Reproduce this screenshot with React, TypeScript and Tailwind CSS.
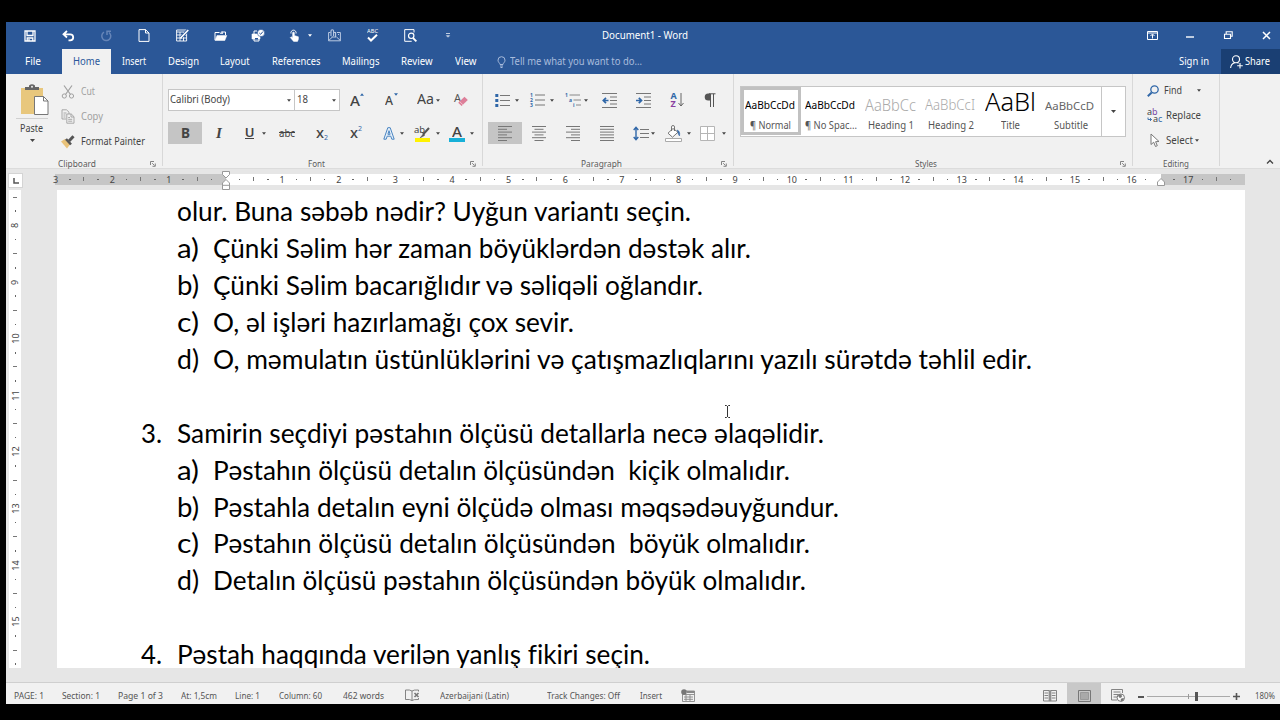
import React, { useLayoutEffect, useRef, useState } from 'react';
import clsx from 'clsx';

// Text squeezed or stretched to an exact width
function Fit({ w, className, children }: { w: number; className?: string; children: React.ReactNode }) {
  const ref = useRef<HTMLSpanElement>(null);
  const [scale, setScale] = useState(1);

  useLayoutEffect(() => {
    if (ref.current) {
      const natural = ref.current.getBoundingClientRect().width / scale;
      if (natural > 0) setScale(w / natural);
    }
  }, [w, children]);

  return (
    <span className={clsx('flex shrink-0 whitespace-pre', className)} style={{ width: w }}>
      <span ref={ref} className="inline-block origin-left" style={{ transform: `scaleX(${scale})` }}>
        {children}
      </span>
    </span>
  );
}

function Caret({ className }: { className?: string }) {
  return (
    <svg className={clsx('shrink-0', className)} width="5" height="3" viewBox="0 0 5 3">
      <path d="M0 0h5L2.5 3z" fill="currentColor" />
    </svg>
  );
}

function Cell({ className, children }: { className?: string; children?: React.ReactNode }) {
  return <div className={clsx('flex shrink-0 items-center justify-center', className)}>{children}</div>;
}

function Svg({ w = 14, h = 14, className, children }: { w?: number; h?: number; className?: string; children: React.ReactNode }) {
  return (
    <svg className={clsx('shrink-0 overflow-visible', className)} width={w} height={h} viewBox={`0 0 ${w} ${h}`} fill="none" stroke="currentColor">
      {children}
    </svg>
  );
}

function Launcher() {
  return (
    <Svg w={6} h={6} className="text-[#777]">
      <path d="M.5 4V.5H4M2.2 2.2l2.3 2.3M5.3 2.5v2.8H2.5" strokeWidth=".9" />
    </Svg>
  );
}

function Group({ className, label, w, launcherPad, children }: { className: string; label: string; w: number; launcherPad?: string; children: React.ReactNode }) {
  return (
    <div className={clsx('flex h-[92px] shrink-0 flex-col border-r border-[#d8d8d8]', className)}>
      <div className="h-[84px] shrink-0">{children}</div>
      <div className="relative flex h-3 shrink-0 items-center justify-center text-[9.5px] text-[#5c5c5c]">
        <Fit w={w}>{label}</Fit>
        {launcherPad && (
          <div className={clsx('absolute top-[3px]', launcherPad)}>
            <Launcher />
          </div>
        )}
      </div>
    </div>
  );
}

function TitleBar() {
  return (
    <div className="relative flex h-[27px] pl-[5px] text-white">
      <Cell className="w-[38px]">
        <Svg w={12} h={12}>
          <path d="M1 1h10v10H1zM3 1v4.5h6V1M3.2 11V8h5.6v3M5 9v2" strokeWidth="1.3" />
        </Svg>
      </Cell>
      <Cell className="w-[38px]">
        <Svg w={13} h={12}>
          <path d="M5 1L1.5 4.3 5 7.5M2 4.3h6.2a3 3 0 0 1 0 6H6.5" strokeWidth="1.8" />
        </Svg>
      </Cell>
      <Cell className="w-[38px] text-[#6685b8]">
        <Svg w={12} h={12}>
          <path d="M4 2.2A4.5 4.5 0 1 0 9 2.5M7 5V1.2h4" strokeWidth="1.5" />
        </Svg>
      </Cell>
      <Cell className="w-[38px]">
        <Svg w={12} h={13}>
          <path d="M1 .6h6.5L11 4v8.4H1zM7.5.6V4H11" strokeWidth="1" />
        </Svg>
      </Cell>
      <Cell className="w-[38px]">
        <Svg w={13} h={13}>
          <path d="M.6 1h10v11H.6zM.6 3h10M.6 6h10M.6 9h10M4 3v9M7.5 3v9" strokeWidth=".9" />
          <path d="M12.5.5L5 8.5" stroke="#2b579a" strokeWidth="3" />
          <path d="M12.3 1L5.5 8 4.5 9.5" strokeWidth="1.6" />
        </Svg>
      </Cell>
      <Cell className="w-[38px]">
        <Svg w={13} h={12}>
          <path d="M1 10V2.5h4.5M7.5 2h4v3" strokeWidth="1" />
          <path d="M1 10.5L3 5.5h9.8l-2 5z" fill="currentColor" strokeWidth=".5" />
          <path d="M6 3.2h3M8 1.5v2" strokeWidth="1" />
        </Svg>
      </Cell>
      <Cell className="w-[38px]">
        <Svg w={14} h={13}>
          <path d="M1 5h8v5H1z" fill="currentColor" strokeWidth=".6" />
          <path d="M3 5V2h3M3 8.5h5v3.5H3z" strokeWidth="1" />
          <path d="M4 9.5h3" stroke="#2b579a" />
          <circle cx="10" cy="4" r="3.6" fill="currentColor" stroke="#2b579a" strokeWidth=".6" />
          <path d="M8.3 4l1.4 1.3 2.2-2.7" stroke="#2b579a" strokeWidth="1" />
        </Svg>
      </Cell>
      <Cell className="w-[38px] gap-[8px] pl-[9px]">
        <Svg w={11} h={13}>
          <path d="M2 4.5a2.6 2.6 0 1 1 5 0" strokeWidth="1" />
          <path d="M3.6 3.6q.9-1 1.8 0v3l4 1.2v2.4L8.5 12.4H4.6L1.3 8.6l.8-.8 1.5 1z" fill="currentColor" strokeWidth=".5" />
        </Svg>
        <Caret className="w-1" />
      </Cell>
      <Cell className="w-[38px] text-[#b9c9e2]">
        <Svg w={13} h={13}>
          <path d="M2.5 3.5H.6v8.3h11.8V3.5H9M.6 11.5L4.5 8M12.4 11.5L8.5 8M10 5.5h1" strokeWidth="1" />
          <path d="M3 7V2a1.3 1.3 0 0 1 2.6 0v5M5.6 3.5h2V8H3.5" strokeWidth="1.1" />
        </Svg>
      </Cell>
      <Cell className="w-[38px] flex-col">
        <Fit w={11} className="text-[5px] leading-[5px]">ABC</Fit>
        <Svg w={11} h={8}>
          <path d="M1 3.5l3 3L10 .8" strokeWidth="2" />
        </Svg>
      </Cell>
      <Cell className="w-[38px]">
        <Svg w={13} h={13}>
          <path d="M10 3.5V.6H.7v11.7h7" strokeWidth="1" />
          <circle cx="7.2" cy="6.8" r="2.7" strokeWidth="1.2" />
          <path d="M9 9l3.4 3.3" strokeWidth="1.8" />
        </Svg>
      </Cell>
      <Cell className="w-[38px]">
        <Svg w={4} h={5}>
          <path d="M0 .5h4M.5 2.7h3L2 4.2z" strokeWidth=".7" />
        </Svg>
      </Cell>
      <Cell className="w-[360px] text-[11px]">
        <Fit w={86} className="-ml-1">Document1 - Word</Fit>
      </Cell>
      <div className="ml-auto mr-[-5px] flex">
        <Cell className="w-[38px]">
          <Svg w={11} h={9}>
            <path d="M.5.5h10v8H.5zM.5 2h10M5.5 7.5v-4M3.5 5l2-2 2 2" strokeWidth="1" />
          </Svg>
        </Cell>
        <Cell className="w-[38px] pt-[3px]">
          <Svg w={8} h={2}>
            <path d="M0 1h8" strokeWidth="1.4" />
          </Svg>
        </Cell>
        <Cell className="w-[38px]">
          <Svg w={9} h={9}>
            <path d="M.5 3.2h6v4.3h-6zM2.2 3V.8h6v4.5H6.7" strokeWidth="1.1" />
          </Svg>
        </Cell>
        <Cell className="w-[38px]">
          <Svg w={9} h={9}>
            <path d="M1 1l7 7M8 1L1 8" strokeWidth="1.5" />
          </Svg>
        </Cell>
      </div>
    </div>
  );
}

const tabs = [
  { name: 'Insert', w: 24 },
  { name: 'Design', w: 31 },
  { name: 'Layout', w: 29.5 },
  { name: 'References', w: 48.5 },
  { name: 'Mailings', w: 37.5 },
  { name: 'Review', w: 31.5 },
  { name: 'View', w: 21.5 },
];

function TabBar() {
  return (
    <div className="flex h-[25px] items-center text-[11px] text-white">
      <Fit w={16} className="ml-[19px] mr-[21px]">File</Fit>
      <div className="flex h-full w-[49px] items-center justify-center bg-[#f1f1f1] text-[#2b579a]">
        <Fit w={27}>Home</Fit>
      </div>
      {tabs.map((t) => (
        <div key={t.name} className="px-[10.9px]">
          <Fit w={t.w}>{t.name}</Fit>
        </div>
      ))}
      <div className="flex items-center gap-1 pl-[10px] text-[#a9bcdc]">
        <Svg w={9} h={12}>
          <path d="M3 8.5C3 7 1 6.5 1 4.2a3.5 3.5 0 0 1 7 0C8 6.5 6 7 6 8.5zM3 10h3M3.5 11.5h2" strokeWidth="1" />
        </Svg>
        <Fit w={132}>Tell me what you want to do...</Fit>
      </div>
      <Fit w={30} className="ml-auto mr-[12.5px]">Sign in</Fit>
      <div className="flex h-full w-[59px] items-center gap-[2px] bg-[#1a3f73] pl-[9px]">
        <Svg w={13} h={14}>
          <circle cx="6" cy="4.3" r="3.5" strokeWidth="1.1" />
          <path d="M.6 13c.3-3 1.8-4.6 4-5.3M7.5 7.7l1 .5M10 8v5.5M7.2 10.7h5.6" strokeWidth="1.1" />
        </Svg>
        <Fit w={25}>Share</Fit>
      </div>
    </div>
  );
}

function Clipboard() {
  return (
    <Group className="w-[157px] pr-[14px]" label="Clipboard" w={38} launcherPad="-right-[8px]">
      <div className="flex h-full">
        <div className="flex w-[42px] flex-col items-center pl-[10px] pt-[10px]">
          <Svg w={29} h={32} className="ml-[4px]">
            <path d="M1 4h22v26H1z" fill="#e8c77d" stroke="none" />
            <path d="M5 6V3h4V1.5q3-2.5 6 0V3h4v3z" fill="#666" stroke="none" />
            <circle cx="12" cy="2.8" r="1" fill="#eee" stroke="none" />
            <path d="M14.5 12.5h9l4.5 4.5v13.5H14.5z" fill="#fff" stroke="#777" />
            <path d="M23.5 12.5V17H28" stroke="#777" />
          </Svg>
          <div className="mt-[2px] h-px w-8 bg-[#d0d0d0]" />
          <Fit w={23} className="-ml-[2px] mt-px text-[10.5px] leading-[16px]">Paste</Fit>
          <Caret className="mt-[3px]" />
        </div>
        <div className="flex flex-col pl-[13px] pt-[5px] text-[10.5px]">
          <div className="flex h-[25px] items-center gap-[6px] text-[#a0a0a0]">
            <Svg w={14} h={14}>
              <path d="M3 .5l6.5 9M11 .5l-6.5 9" strokeWidth="1.2" />
              <circle cx="3.3" cy="11" r="2.1" />
              <circle cx="10.5" cy="11" r="2.1" />
            </Svg>
            <Fit w={14}>Cut</Fit>
          </div>
          <div className="flex h-[25px] items-center gap-[6px] text-[#a0a0a0]">
            <Svg w={14} h={15}>
              <path d="M5 10H1V.8h4.5L8 3.2V5M2.5 4h3M2.5 6h2M2.5 8h2" strokeWidth=".9" />
              <path d="M5.8 5h4.5L13 7.7v6.5H5.8zM10 5v3h3M7.2 8.5H9M7.2 10.3h4M7.2 12.2h4" strokeWidth=".9" />
            </Svg>
            <Fit w={22}>Copy</Fit>
          </div>
          <div className="flex h-[26px] items-center gap-[6px]">
            <Svg w={14} h={14}>
              <path d="M0 6.5l4-2.5 5 5.5-3 4z" fill="#e8c27a" stroke="none" />
              <path d="M5 4l5 5.5" stroke="#555" strokeWidth="2.6" />
              <path d="M8 6l4.5-4.7" stroke="#555" strokeWidth="3" />
            </Svg>
            <Fit w={64}>Format Painter</Fit>
          </div>
        </div>
      </div>
    </Group>
  );
}

function FontGroup() {
  return (
    <Group className="w-[320px] pl-[5px] pr-[18px]" label="Font" w={17} launcherPad="-right-[12px]">
      <div className="flex h-[48px] items-end pb-[11px]">
        <div className="flex h-[22px] w-[127px] shrink-0 items-center justify-between border border-[#c6c6c6] bg-white pl-[1px] pr-[3px] text-[10.5px]">
          <Fit w={60}>Calibri (Body)</Fit>
          <Caret className="w-1" />
        </div>
        <div className="flex h-[22px] w-[45px] shrink-0 items-center justify-between border border-l-0 border-[#c6c6c6] bg-white pl-[2px] pr-[3px] text-[10.5px]">
          <Fit w={11}>18</Fit>
          <Caret className="w-1" />
        </div>
        <Cell className="h-[22px] w-[34px]">
          <Fit w={10} className="text-[15px] font-medium leading-none">A</Fit>
          <Caret className="mb-[11px] w-1 rotate-180 text-[#3067a8]" />
        </Cell>
        <Cell className="h-[22px] w-[34px]">
          <Fit w={8} className="pt-[2px] text-[12.5px] font-medium leading-none">A</Fit>
          <Caret className="mb-[12px] ml-[1px] w-1 text-[#3067a8]" />
        </Cell>
        <Cell className="h-[22px] w-[40px] gap-[2px]">
          <Fit w={17} className="text-[13.5px] leading-none">Aa</Fit>
          <Caret className="w-1" />
        </Cell>
        <Cell className="h-[22px] w-[26px]">
          <Svg w={14} h={14}>
            <text x="0" y="9" fontSize="11" fill="#555" stroke="none">A</text>
            <path d="M10.5 3.8l3.3 3.3-6.2 6L4.2 9.8z" fill="#dd7f99" stroke="none" />
            <path d="M5.6 8.5L9 11.9" stroke="#f5cbd6" strokeWidth=".8" />
          </Svg>
        </Cell>
      </div>
      <div className="flex h-[22px]">
        <Cell className="w-[34px] bg-[#c5c5c5]">
          <Fit w={9} className="text-[14px] font-bold leading-none">B</Fit>
        </Cell>
        <Cell className="w-[34px] font-['Liberation_Serif'] text-[15px] font-bold italic leading-none">I</Cell>
        <Cell className="w-[34px] gap-[8px] pl-[5px]">
          <span className="border-b-[1.5px] border-[#444] text-[13px] font-semibold leading-[11px]">U</span>
          <Caret className="w-1" />
        </Cell>
        <Cell className="w-[34px]">
          <Fit w={16} className="text-[11px] line-through">abc</Fit>
        </Cell>
        <Cell className="w-[34px] pl-[2px]">
          <Fit w={8} className="text-[14px] font-medium leading-none">x</Fit>
          <span className="mt-[9px] text-[7px] leading-none text-[#3067a8]">2</span>
        </Cell>
        <Cell className="w-[34px] pl-[2px]">
          <Fit w={8} className="text-[14px] font-medium leading-none">x</Fit>
          <span className="mb-[9px] text-[7px] leading-none text-[#3067a8]">2</span>
        </Cell>
        <Cell className="w-[34px] gap-[5px] pl-[8px]">
          <Svg w={12} h={13}>
            <path d="M4.8.7h2.4l4 11.5H8.8l-1-3H4.2l-1 3H.8zM6 3.7L4.9 7.3h2.2z" fill="#e6f0fa" stroke="#4b86c2" strokeWidth="1" />
          </Svg>
          <Caret className="w-1" />
        </Cell>
        <Cell className="w-[34px] gap-[5px] pl-[7px]">
          <Svg w={17} h={17}>
            <text x="0" y="8" fontSize="9.5" fill="#444" stroke="none">ab</text>
            <path d="M15 3l-6 6.5" strokeWidth="2" stroke="#555" />
            <path d="M10 8l-4 5 4.5-2.5z" fill="#555" stroke="#555" strokeWidth=".5" />
            <path d="M1 13h15v4H1z" fill="#fff200" stroke="none" />
          </Svg>
          <Caret className="w-1" />
        </Cell>
        <Cell className="w-[36px] gap-[5px] pl-[7px]">
          <div className="flex w-4 flex-col items-center">
            <Fit w={10} className="text-[14px] font-medium leading-[13px]">A</Fit>
            <div className="h-1 w-4 bg-[#17b0d8]" />
          </div>
          <Caret className="w-1" />
        </Cell>
      </div>
    </Group>
  );
}

function AlignLines({ d }: { d: string }) {
  return (
    <Svg w={14} h={15} className="text-[#777]">
      <path d={d} strokeWidth="1" />
    </Svg>
  );
}

function ParagraphGroup() {
  return (
    <Group className="w-[251px] pl-[5px] pr-[18px]" label="Paragraph" w={41} launcherPad="-right-[12px]">
      <div className="flex h-[48px] items-end pb-[11px]">
        <Cell className="h-[22px] w-[35px] gap-[5px] pl-[3px]">
          <Svg w={15} h={15} className="text-[#777]">
            <path d="M5 2.5h10M5 7.5h10M5 12.5h10" />
            <path d="M.3 2.5h3M.3 7.5h3M.3 12.5h3" stroke="#3067a8" strokeWidth="3" />
          </Svg>
          <Caret className="w-1" />
        </Cell>
        <Cell className="h-[22px] w-[35px] gap-[5px] pl-[2px]">
          <Svg w={15} h={16} className="text-[#777]">
            <path d="M5 3h10M5 8h10M5 13h10" />
            <g fill="#3067a8" stroke="none" fontSize="5" fontWeight="bold">
              <text x="0" y="4.8">1</text>
              <text x="0" y="10">2</text>
              <text x="0" y="15.2">3</text>
            </g>
          </Svg>
          <Caret className="w-1" />
        </Cell>
        <Cell className="h-[22px] w-[34px] gap-[3px] pl-[2px]">
          <Svg w={16} h={16} className="text-[#888]">
            <path d="M4.5 3H15M8.5 8H16M11 13h5" />
            <g fill="#3067a8" stroke="none" fontSize="5" fontWeight="bold">
              <text x="0" y="4.8">1</text>
              <text x="4" y="10">a</text>
              <text x="8" y="15.2">i</text>
            </g>
          </Svg>
          <Caret className="w-1" />
        </Cell>
        <Cell className="h-[22px] w-[34px]">
          <Svg w={15} h={15} className="text-[#777]">
            <path d="M0 .5h15M8 4h7M8 7.5h7M8 11h7M0 14.5h15" />
            <path d="M6.5 7.5H1.5M4 4.8L1.3 7.5 4 10.2" stroke="#3067a8" strokeWidth="1.7" />
          </Svg>
        </Cell>
        <Cell className="h-[22px] w-[34px]">
          <Svg w={15} h={15} className="text-[#777]">
            <path d="M0 .5h15M8 4h7M8 7.5h7M8 11h7M0 14.5h15" />
            <path d="M0 7.5h5.3M2.8 4.8l2.7 2.7-2.7 2.7" stroke="#3067a8" strokeWidth="1.7" />
          </Svg>
        </Cell>
        <Cell className="h-[22px] w-[34px]">
          <div className="flex flex-col text-[9px] font-bold leading-[8px]">
            <span className="text-[#3067a8]">A</span>
            <span className="text-[#8a3fa0]">Z</span>
          </div>
          <Svg w={6} h={14} className="ml-px text-[#666]">
            <path d="M3 0v13M.5 10L3 13l2.5-3" />
          </Svg>
        </Cell>
        <Cell className="h-[22px] w-[32px]">
          <Svg w={12} h={14} className="text-[#555]">
            <path d="M5 .8h6.5M6.5.8V14M9.5.8V14" strokeWidth="1" />
            <path d="M6 .5H4.2a3.5 3.5 0 0 0 0 7H6z" fill="currentColor" stroke="none" />
          </Svg>
        </Cell>
      </div>
      <div className="flex h-[22px]">
        <Cell className="w-[34px] bg-[#c5c5c5]">
          <AlignLines d="M0 .5h14M0 3.3h9M0 6.1h14M0 8.9h9M0 11.7h14M0 14.5h9" />
        </Cell>
        <Cell className="w-[34px]">
          <AlignLines d="M0 .5h14M2.5 3.3h9M0 6.1h14M2.5 8.9h9M0 11.7h14M2.5 14.5h9" />
        </Cell>
        <Cell className="w-[34px]">
          <AlignLines d="M0 .5h14M5 3.3h9M0 6.1h14M5 8.9h9M0 11.7h14M5 14.5h9" />
        </Cell>
        <Cell className="w-[34px]">
          <AlignLines d="M0 .5h14M0 3.3h14M0 6.1h14M0 8.9h14M0 11.7h14M0 14.5h14" />
        </Cell>
        <Cell className="w-[34px] gap-[2px] pl-[5px]">
          <Svg w={16} h={15} className="text-[#777]">
            <path d="M7 3.5h9M7 7.5h9M7 11.5h9" />
            <path d="M3 1.5v12M.7 4L3 1.3 5.3 4M.7 11L3 13.7 5.3 11" stroke="#3067a8" strokeWidth="1.4" />
          </Svg>
          <Caret className="w-1" />
        </Cell>
        <Cell className="w-[34px] gap-[5px] pl-[6px]">
          <Svg w={17} h={17} className="text-[#666]">
            <path d="M8 3.5L3 8.2l4.5 4 5.5-5zM6.5 6V2a1.5 1.5 0 0 1 3 0v4" fill="#fff" strokeWidth=".9" />
            <path d="M12 5q3.5 1 2.5 6-1.5-1.5-1.5-4z" fill="#3067a8" stroke="#3067a8" strokeWidth=".5" />
            <path d="M.5 13.5h16v3H.5z" fill="#fff" stroke="#aaa" />
          </Svg>
          <Caret className="w-1" />
        </Cell>
        <Cell className="w-[36px] gap-[7px] pl-[6px]">
          <Svg w={15} h={15} className="text-[#b5b5b5]">
            <path d="M.5.5h14v14H.5zM7.5.5v14M.5 7.5h14" fill="#fff" />
          </Svg>
          <Caret className="w-1" />
        </Cell>
      </div>
    </Group>
  );
}

const styles = [
  { sample: 'AaBbCcDd', w: 50, cls: 'text-[11.5px] text-black', name: '¶ Normal', lw: 41 },
  { sample: 'AaBbCcDd', w: 50, cls: 'text-[11.5px] text-black', name: '¶ No Spac...', lw: 52 },
  { sample: 'AaBbCc', w: 51, cls: 'text-[16px] font-light text-[#aaa]', name: 'Heading 1', lw: 46 },
  { sample: 'AaBbCcI', w: 50, cls: 'text-[14px] font-light text-[#aaa]', name: 'Heading 2', lw: 46 },
  { sample: 'AaBl', w: 51, cls: 'text-[25px] font-light text-black', name: 'Title', lw: 19 },
  { sample: 'AaBbCcD', w: 49, cls: 'text-[11px] text-[#666]', name: 'Subtitle', lw: 34 },
];

function StylesGroup() {
  return (
    <Group className="w-[399px] pl-[6px] pr-[20px]" label="Styles" w={22} launcherPad="-right-[14px]">
      <div className="pt-[12px]">
        <div className="flex h-[51px] w-[386px] border border-[#c6c6c6] bg-white">
          {styles.map((s, i) => (
            <div
              key={s.name}
              className={clsx('flex w-[60px] shrink-0 flex-col items-center', i === 0 && 'h-[48px] outline-3 -outline-offset-3 outline-[#c1c1c1]')}
            >
              <div className={clsx('flex h-[31px] w-[52px] items-center', i === 4 ? 'pb-[3px]' : 'pt-[5px]')}>
                <Fit w={s.w} className={clsx('leading-none', s.cls)}>{s.sample}</Fit>
              </div>
              <Fit w={s.lw} className="-ml-px text-[10px] leading-[14px] text-[#555]">{s.name}</Fit>
            </div>
          ))}
          <Cell className="flex-1 border-l border-[#c6c6c6]">
            <Caret />
          </Cell>
        </div>
      </div>
    </Group>
  );
}

function EditingGroup() {
  return (
    <Group className="w-[87px]" label="Editing" w={26}>
      <div className="flex flex-col pl-[14px] pt-[4px] text-[10.5px]">
        <div className="flex h-[25px] items-center">
          <Svg w={12} h={12} className="text-[#3067a8]">
            <circle cx="7.5" cy="4.5" r="3.7" strokeWidth="1.3" />
            <path d="M4.7 7.5L.8 11.3" strokeWidth="2" />
          </Svg>
          <Fit w={18} className="ml-[5px]">Find</Fit>
          <Caret className="ml-[15px] w-1" />
        </div>
        <div className="flex h-[25px] items-center">
          <Svg w={16} h={15}>
            <g stroke="none" fontSize="9" fill="#444">
              <text x="0" y="7">a</text>
              <text x="5" y="7" fill="#7a4aa5">b</text>
              <text x="6" y="14">a</text>
              <text x="11" y="14" fill="#3067a8">c</text>
            </g>
            <path d="M1 9.5v2h3.5M3 10l1.5 1.5L3 13" stroke="#3067a8" strokeWidth=".9" />
          </Svg>
          <Fit w={35} className="ml-[3px]">Replace</Fit>
        </div>
        <div className="flex h-[25px] items-center pl-[3px]">
          <Svg w={10} h={15} className="text-[#777]">
            <path d="M1 1v10.5l2.7-2.3L5.5 13.5l1.8-.8-1.7-4L9 8.5z" fill="#fff" />
          </Svg>
          <Fit w={27} className="ml-[6px]">Select</Fit>
          <Caret className="ml-[2px] w-1" />
        </div>
      </div>
    </Group>
  );
}

function Ruler() {
  return (
    <div className="relative flex h-[21px] pl-[2px]">
      <div className="mt-[4px] flex h-[15px] w-[15px] items-center justify-center border border-[#d4d4d4] bg-white">
        <Svg w={6} h={6} className="text-[#555]">
          <path d="M1 0v5h5" strokeWidth="1.5" />
        </Svg>
      </div>
      <div className="ml-[32px] mt-[5px] flex h-[11px]">
        <div className="w-[171px] bg-[#c6c6c6]" />
        <div className="w-[935px] bg-white" />
        <div className="w-[84px] bg-[#c6c6c6]" />
      </div>
      <div className="absolute left-[42.6px] top-[4.5px] flex h-[11px] items-center text-[9px] text-[#444]">
        {Array.from({ length: 84 }, (_, i) => (
          <div key={i} className="flex w-[14.169px] shrink-0 justify-center">
            {i % 4 === 0 && i !== 12 && <span className="leading-none">{Math.abs(i / 4 - 3)}</span>}
            {i % 4 === 2 && i !== 78 && <span className="h-[4px] w-px bg-[#777]" />}
            {i % 2 === 1 && <span className="my-auto h-px w-[1.5px] bg-[#666]" />}
          </div>
        ))}
      </div>
      <Svg w={8} h={19} className="absolute left-[216px] top-[2px] text-[#999]">
        <path d="M.5.5h7v3L4 7 .5 3.5zM4 8.5l3.5 3.5v6.5h-7V12zM.5 14.3h7" fill="#fff" />
      </Svg>
      <Svg w={8} h={8} className="absolute left-[1151px] top-[9px] text-[#999]">
        <path d="M4 .5L7.5 4v3.5h-7V4z" fill="#fff" />
      </Svg>
    </div>
  );
}

function SideRuler() {
  return (
    <div className="ml-[3px] h-[478px] w-[12px] shrink-0 overflow-hidden bg-white text-[9px] text-[#444]">
      {Array.from({ length: 34 }, (_, i) => (
        <div key={i} className="flex h-[14.163px] items-center justify-center">
          {i % 4 === 2 && <span className="-rotate-90 leading-none">{8 + (i - 2) / 4}</span>}
          {i % 4 === 0 && <span className="h-px w-[4px] bg-[#777]" />}
          {i % 2 === 1 && <span className="h-[1.5px] w-px bg-[#666]" />}
        </div>
      ))}
    </div>
  );
}

const lines: { num?: string; mark?: string; text?: string; w?: number }[] = [
  { text: 'olur. Buna səbəb nədir? Uyğun variantı seçin.', w: 514 },
  { mark: 'a)', text: 'Çünki Səlim hər zaman böyüklərdən dəstək alır.', w: 538 },
  { mark: 'b)', text: 'Çünki Səlim bacarığlıdır və səliqəli oğlandır.', w: 490 },
  { mark: 'c)', text: 'O, əl işləri hazırlamağı çox sevir.', w: 361 },
  { mark: 'd)', text: 'O, məmulatın üstünlüklərini və çatışmazlıqlarını yazılı sürətdə təhlil edir.', w: 819 },
  {},
  { num: '3.', text: 'Samirin seçdiyi pəstahın ölçüsü detallarla necə əlaqəlidir.', w: 647 },
  { mark: 'a)', text: 'Pəstahın ölçüsü detalın ölçüsündən  kiçik olmalıdır.', w: 577 },
  { mark: 'b)', text: 'Pəstahla detalın eyni ölçüdə olması məqsədəuyğundur.', w: 626 },
  { mark: 'c)', text: 'Pəstahın ölçüsü detalın ölçüsündən  böyük olmalıdır.', w: 597 },
  { mark: 'd)', text: 'Detalın ölçüsü pəstahın ölçüsündən böyük olmalıdır.', w: 593 },
  {},
  { num: '4.', text: 'Pəstah haqqında verilən yanlış fikiri seçin.', w: 473 },
];

function Page() {
  return (
    <div className="relative ml-[36px] h-[478px] w-[1188px] overflow-hidden bg-white pl-[84px] pt-[3px] font-[Lato,'Noto_Sans',sans-serif] text-[26.5px] leading-[36.95px] text-black [font-variant-ligatures:none]">
      {lines.map((l, i) => (
        <div key={i} className="flex h-[36.95px]">
          <div className="w-[36px] shrink-0">{l.num && <Fit w={21}>{l.num}</Fit>}</div>
          {l.mark && (
            <div className="w-[36px] shrink-0">
              <Fit w={22}>{l.mark}</Fit>
            </div>
          )}
          {l.text && <Fit w={l.w ?? 0}>{l.text}</Fit>}
        </div>
      ))}
      <Svg w={7} h={13} className="absolute left-[667px] top-[215px] text-[#333]">
        <path d="M1 .5h1.5l1 1 1-1H6M3.5 1v11M1 12.5h1.5l1-1 1 1H6" />
      </Svg>
    </div>
  );
}

function StatusBar() {
  return (
    <div className="flex h-[22px] items-center border-t border-[#cfcfcf] bg-[#f1f1f1] pl-[8px] pt-[6px] text-[9.5px] text-[#555]">
      <Fit w={30}>PAGE: 1</Fit>
      <Fit w={38} className="ml-[18px]">Section: 1</Fit>
      <Fit w={45} className="ml-[18px]">Page 1 of 3</Fit>
      <Fit w={36} className="ml-[18px]">At: 1,5cm</Fit>
      <Fit w={25} className="ml-[18px]">Line: 1</Fit>
      <Fit w={43} className="ml-[19px]">Column: 60</Fit>
      <Fit w={41} className="ml-[21px]">462 words</Fit>
      <Svg w={14} h={12} className="-mt-[3px] ml-[21px] text-[#777]">
        <path d="M7 2v9.5M7 2Q5 .5.5 1v9.5Q5 10 7 11.5 8.5 10.3 13.5 10.5V9M7 2Q8.5.7 13.5 1v1.5" strokeWidth=".9" />
        <path d="M9.5 4l4 4M13.5 4l-4 4" strokeWidth="1.6" />
      </Svg>
      <Fit w={69} className="ml-[21px]">Azerbaijani (Latin)</Fit>
      <Fit w={73} className="ml-[38px]">Track Changes: Off</Fit>
      <Fit w={22} className="ml-[20px]">Insert</Fit>
      <Svg w={14} h={13} className="-mt-[3px] ml-[19px] text-[#888]">
        <path d="M1.5 4v8.5h12V2H5M1.5 5.5h12M5 6v6M9 6v6M3 8h9M3 10.3h9" strokeWidth=".9" />
        <path d="M6 3h7.5" strokeWidth="2" />
        <circle cx="3" cy="3" r="2.8" fill="#777" stroke="none" />
      </Svg>
      <div className="ml-auto -mt-[6px] flex h-[21px] items-center">
        <Svg w={14} h={12} className="mt-[4px] text-[#777]">
          <path d="M.5.5h5.7v10.5H.5zM7.8.5h5.7v10.5H7.8zM7 0v12M1.5 3h3.7M1.5 5.5h3.7M1.5 8h3.7M8.8 3h3.7M8.8 5.5h3.7M8.8 8h3.7" strokeWidth=".9" />
        </Svg>
        <Cell className="ml-[10px] h-full w-[34px] bg-[#c8c8c8] pt-[4px]">
          <Svg w={13} h={12} className="text-[#777]">
            <path d="M.5.5h12v11H.5z" />
            <path d="M2.5 2.5h8v7h-8z" fill="#a9a9a9" stroke="#999" />
          </Svg>
        </Cell>
        <Svg w={14} h={13} className="ml-[10px] mt-[4px] text-[#777]">
          <path d="M6 11H.5V.5h11V4M2.5 3h7M2.5 5.5h5M2.5 8h3.5" strokeWidth=".9" />
          <circle cx="9.8" cy="8.7" r="3.7" fill="#fff" />
          <path d="M7 6.5l3-1 1 2-2 1.5zM10 10l2.5-1-.5 2.5-2 .5z" fill="currentColor" strokeWidth=".5" />
        </Svg>
        <div className="mt-[6px] flex items-center">
          <div className="ml-[13px] h-[2px] w-[6px] bg-[#555]" />
          <div className="relative ml-[3px] h-px w-[83px] bg-[#aaa]">
            <div className="absolute -top-[2px] left-[41px] h-[5px] w-px bg-[#999]" />
            <div className="absolute -top-[4px] left-[48px] h-[9px] w-[3px] bg-[#555]" />
          </div>
          <Svg w={7} h={7} className="ml-[3px]">
            <path d="M0 3.5h7M3.5 0v7" strokeWidth="1.6" />
          </Svg>
          <Fit w={20} className="ml-[15px] mr-[5px]">180%</Fit>
        </div>
      </div>
    </div>
  );
}

export default function App() {
  return (
    <div className="h-[720px] w-[1280px] overflow-hidden bg-black pl-[6px] pt-[22px] font-['Noto_Sans','Open_Sans',sans-serif] text-[#444]">
      <div className="h-[682px] w-[1274px] overflow-hidden bg-[#e6e6e6]">
        <div className="bg-[#2b5797]">
          <TitleBar />
          <TabBar />
        </div>
        <div className="flex h-[95px] border-b border-[#dcdcdc] bg-[#f1f1f1]">
          <Clipboard />
          <FontGroup />
          <ParagraphGroup />
          <StylesGroup />
          <EditingGroup />
          <Svg w={8} h={6} className="ml-auto mr-[6px] mt-[85px]">
            <path d="M1 4.5l3-3 3 3" strokeWidth="1.3" />
          </Svg>
        </div>
        <Ruler />
        <div className="flex h-[492px]">
          <SideRuler />
          <Page />
        </div>
        <StatusBar />
      </div>
    </div>
  );
}
